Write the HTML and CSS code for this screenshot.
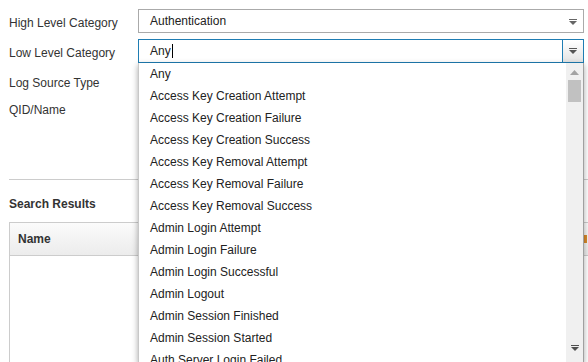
FILE: index.html
```html
<!DOCTYPE html>
<html lang="en">
<head>
    <meta charset="UTF-8">
    <title>Event Search</title>
    <link rel="stylesheet" href="styles.css">
</head>
<body>
    <div class="search-form">
        <div class="form-row">
            <label class="field-label">High Level Category</label>
            <div class="select-box">
                <span class="select-value">Authentication</span>
                <svg class="arrow" width="8" height="6" viewBox="0 0 8 6"><rect x="0" y="0" width="8" height="1" fill="#666"/><polygon points="0,2 8,2 4,6" fill="#666"/></svg>
            </div>
        </div>
        <div class="form-row combo-row">
            <label class="field-label">Low Level Category</label>
            <div class="combo-box">
                <span class="combo-value">Any<span class="caret"></span></span>
                <span class="combo-button">
                    <svg width="8" height="6" viewBox="0 0 8 6"><rect x="0" y="0" width="8" height="1" fill="#555"/><polygon points="0,2 8,2 4,6" fill="#555"/></svg>
                </span>
            </div>

            <!-- open list -->
            <div class="dropdown">
                <ul class="option-list">
                    <li>Any</li>
                    <li>Access Key Creation Attempt</li>
                    <li>Access Key Creation Failure</li>
                    <li>Access Key Creation Success</li>
                    <li>Access Key Removal Attempt</li>
                    <li>Access Key Removal Failure</li>
                    <li>Access Key Removal Success</li>
                    <li>Admin Login Attempt</li>
                    <li>Admin Login Failure</li>
                    <li>Admin Login Successful</li>
                    <li>Admin Logout</li>
                    <li>Admin Session Finished</li>
                    <li>Admin Session Started</li>
                    <li>Auth Server Login Failed</li>
                </ul>
                <div class="scrollbar">
                    <svg class="scroll-up" width="9" height="5" viewBox="0 0 9 5"><polygon points="0,5 9,5 4.5,0" fill="#a3a3a3"/></svg>
                    <div class="scroll-thumb"></div>
                    <svg class="scroll-down" width="8" height="6" viewBox="0 0 8 6"><rect x="0" y="0" width="8" height="1" fill="#505050"/><polygon points="0,2 8,2 4,6" fill="#505050"/></svg>
                </div>
            </div>
        </div>
        <div class="form-row source-row">
            <label class="field-label">Log Source Type</label>
            <div class="select-box"></div>
        </div>
        <div class="form-row qid-row">
            <label class="field-label">QID/Name</label>
            <div class="select-box"></div>
        </div>
    </div>

    <hr class="divider">

    <h3 class="section-title">Search Results</h3>
    <div class="results-table">
        <div class="table-head">
            <span class="col-name">Name</span>
            <span class="col-other"></span>
        </div>
        <div class="table-body"></div>
    </div>
</body>
</html>
```
FILE: styles.css
```css
body {
    margin: 0;
    padding: 9px 0 0 9px;
    font-family: "Liberation Sans", Arial, sans-serif;
    font-size: 12px;
    color: #333;
    background: #fff;
    overflow: hidden;
    height: 353px;
}

.search-form {
    display: flex;
    flex-direction: column;
    width: 575px;
}

.form-row {
    display: flex;
    align-items: center;
    height: 24px;
}

.combo-row {
    position: relative;
    margin-top: 6px;
}

.source-row {
    margin-top: 7px;
}

.qid-row {
    margin-top: 3px;
}

.field-label {
    width: 129px;
    flex: none;
    padding-top: 3px;
}

.source-row .field-label,
.qid-row .field-label {
    padding-top: 2px;
}

.select-box {
    flex: 1;
    height: 22px;
    border: 1px solid #aaa;
    display: flex;
    align-items: center;
    justify-content: space-between;
    padding: 0 6px 0 11px;
    color: #222;
}

.select-box .arrow {
    margin-top: 1px;
}

.combo-box {
    flex: 1;
    height: 22px;
    border: 1px solid #1f7db3;
    display: flex;
    align-items: center;
    color: #222;
}

.combo-value {
    flex: 1;
    padding-left: 11px;
    display: flex;
    align-items: center;
}

.caret {
    display: inline-block;
    width: 1px;
    height: 14px;
    background: #000;
    margin-left: 1px;
}

.combo-button {
    width: 20px;
    height: 22px;
    border-left: 1px solid #1f7db3;
    background: linear-gradient(#ffffff, #e4e4e4);
    display: flex;
    align-items: center;
    justify-content: center;
}

/* open list over the form, runs past the bottom of the window */
.dropdown {
    position: absolute;
    top: 24px;
    left: 129px;
    right: 0;
    height: 300px;
    background: #fff;
    border-left: 1px solid #c8c8c8;
    border-right: 1px solid #a0a0a0;
    box-shadow: 0 2px 6px rgba(0, 0, 0, 0.35);
    display: flex;
    overflow: hidden;
    z-index: 5;
}

.option-list {
    list-style: none;
    margin: 0;
    padding: 0;
    flex: 1;
}

.option-list li {
    height: 22px;
    line-height: 22px;
    padding-left: 11px;
    color: #222;
    white-space: nowrap;
}

.scrollbar {
    width: 17px;
    background: #f0f0f0;
    display: flex;
    flex-direction: column;
    align-items: center;
}

.scroll-up {
    margin-top: 7px;
}

.scroll-thumb {
    width: 13px;
    height: 22px;
    background: #c1c1c1;
    margin-top: 5px;
}

.scroll-down {
    margin-top: auto;
    margin-bottom: 12px;
}

.divider {
    border: none;
    border-top: 1px solid #ccc;
    margin: 58px 0 0 0;
}

.section-title {
    font-size: 12px;
    font-weight: bold;
    margin: 17px 0 0 0;
    color: #333;
}

.results-table {
    margin-top: 11px;
    border-left: 1px solid #ccc;
    height: 140px;
    box-sizing: border-box;
}

.table-head {
    height: 32px;
    border-top: 1px solid #ccc;
    border-bottom: 1px solid #ccc;
    background: linear-gradient(#fbfbfb, #ececec);
    display: flex;
    align-items: center;
    justify-content: space-between;
}

.col-name {
    font-weight: bold;
    padding-left: 8px;
    color: #333;
}

.col-other {
    width: 3px;
    height: 8px;
    background: #d98a2b;
    margin-right: 1px;
}
```
